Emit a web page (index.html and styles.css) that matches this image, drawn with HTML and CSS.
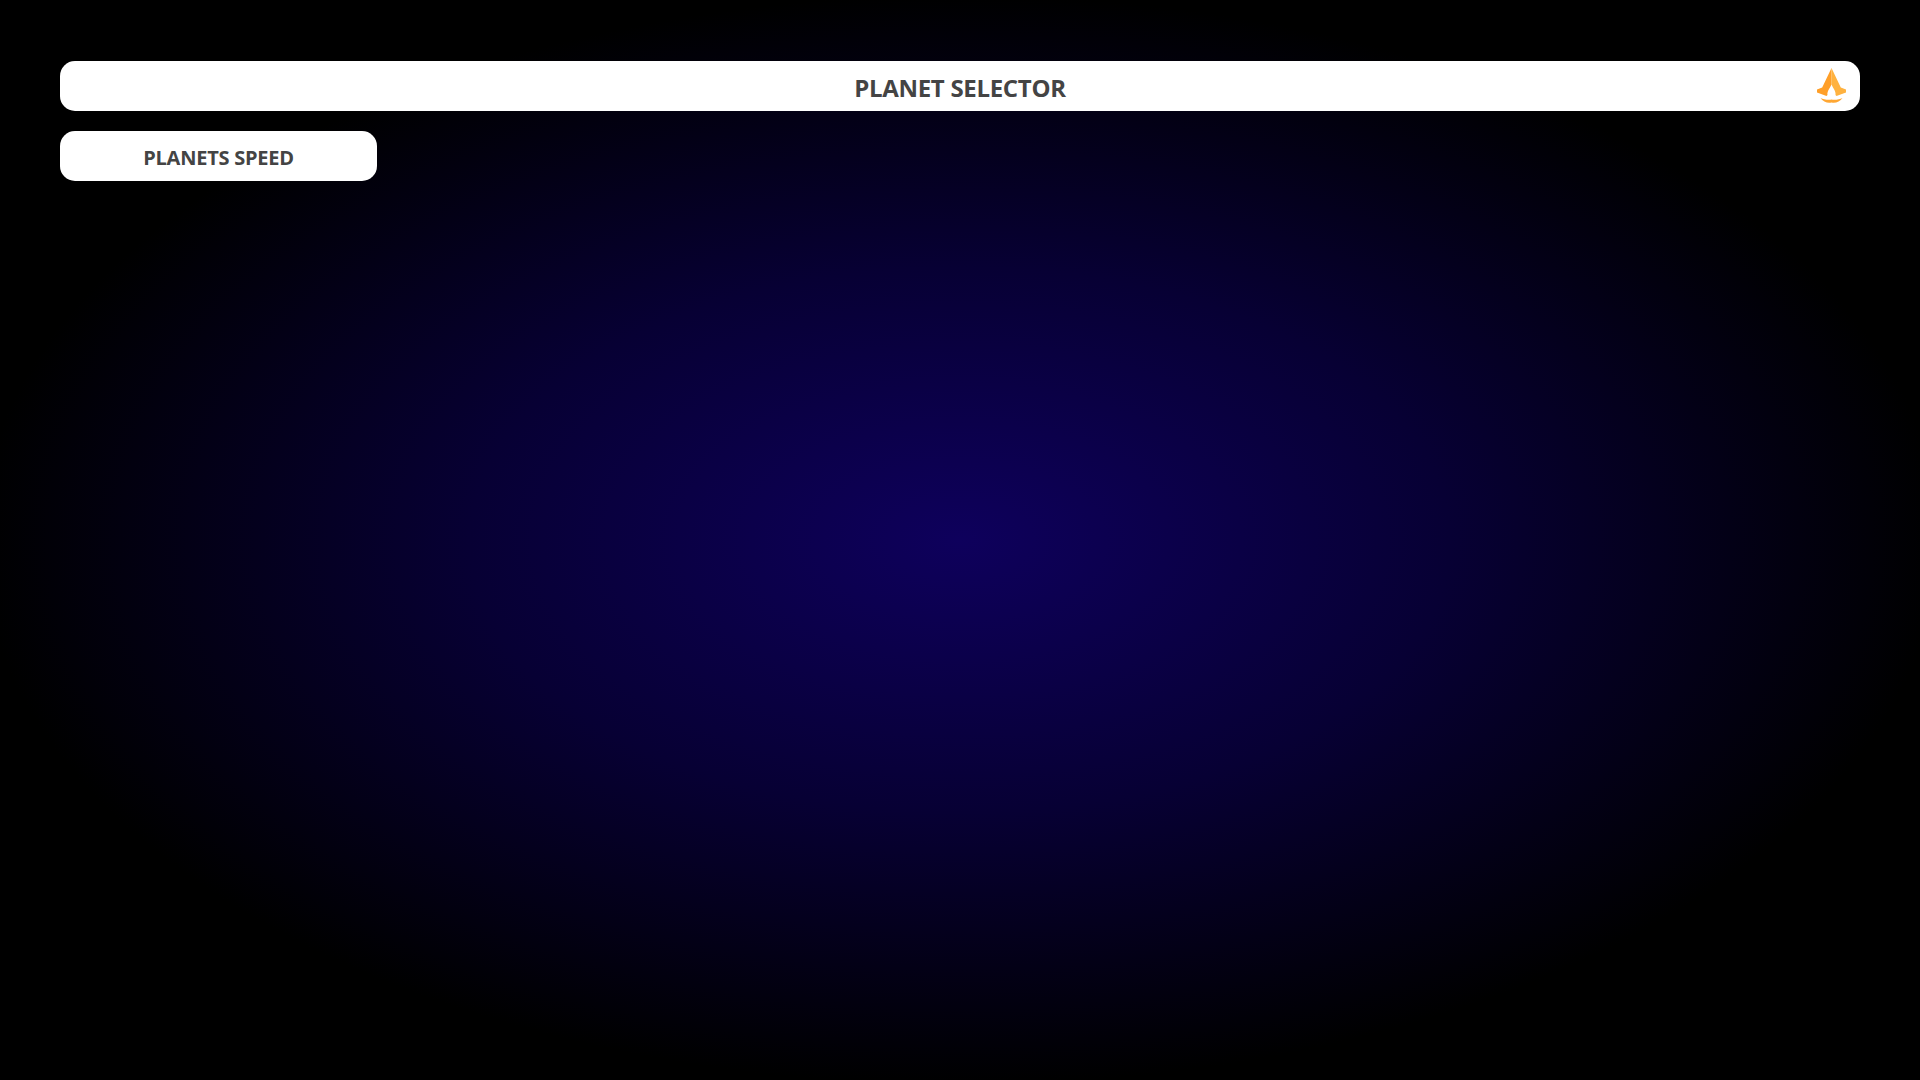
FILE: index.html
```html
<!DOCTYPE html>
<html lang="en">
<head>
<meta charset="utf-8">
<title>Planet Selector</title>
<link rel="stylesheet" href="styles.css">
</head>
<body>
<main class="page">
  <header class="bar title-bar">
    <h1 class="title">PLANET SELECTOR</h1>
    <svg class="logo" viewBox="0 0 29 36" width="29" height="36" aria-hidden="true">
      <path fill="#ff9f28" d="M14.500 0 L14.500 16.500 C13 20 9.800 23.500 10.500 27 L9.500 28 L0 24.500 L0 21.500 L5.200 19.500 Z"/>
      <path fill="#ffb23f" d="M14.500 0 L14.500 16.500 C16 20 19.200 23.500 18.500 27 L19.500 28 L29 24.500 L29 21.500 L23.800 19.500 Z"/>
      <path fill="#ffa733" d="M3.500 30 C6.500 31.300 10.500 32.300 14.500 31.600 C18.500 32.300 22.500 31.300 25.500 30 C23 33.800 18 35.500 14.500 34.400 C11 35.500 6 33.800 3.500 30 Z"/>
    </svg>
  </header>
  <section class="bar speed-bar">
    <h2 class="speed-label">PLANETS SPEED</h2>
  </section>
</main>
</body>
</html>
```
FILE: styles.css
```css
* {
  box-sizing: border-box;
}
html,
body {
  margin: 0;
  height: 100%;
}
body {
  background: radial-gradient(ellipse 980px 545px at 50% 50%, #0e005c 0%, #070034 50%, #000 100%) #000;
  font-family: "Open Sans", "Noto Sans", sans-serif;
  color: #444;
}
.page {
  padding: 61px 60px 0;
  display: flex;
  flex-direction: column;
  gap: 20px;
  height: 1080px;
  overflow: hidden;
}
.bar {
  background: #fff;
  border-radius: 15px;
  height: 50px;
  padding-top: 2px;
  display: flex;
  align-items: center;
  justify-content: center;
  flex: none;
}
.title-bar {
  position: relative;
}
.title {
  margin: 0;
  font-size: 24px;
  font-weight: 700;
  letter-spacing: -0.3px;
}
.logo {
  position: absolute;
  right: 14px;
  top: 7px;
}
.speed-bar {
  width: 317px;
}
.speed-label {
  margin: 0;
  font-size: 20px;
  font-weight: 700;
  letter-spacing: -0.25px;
}
```
